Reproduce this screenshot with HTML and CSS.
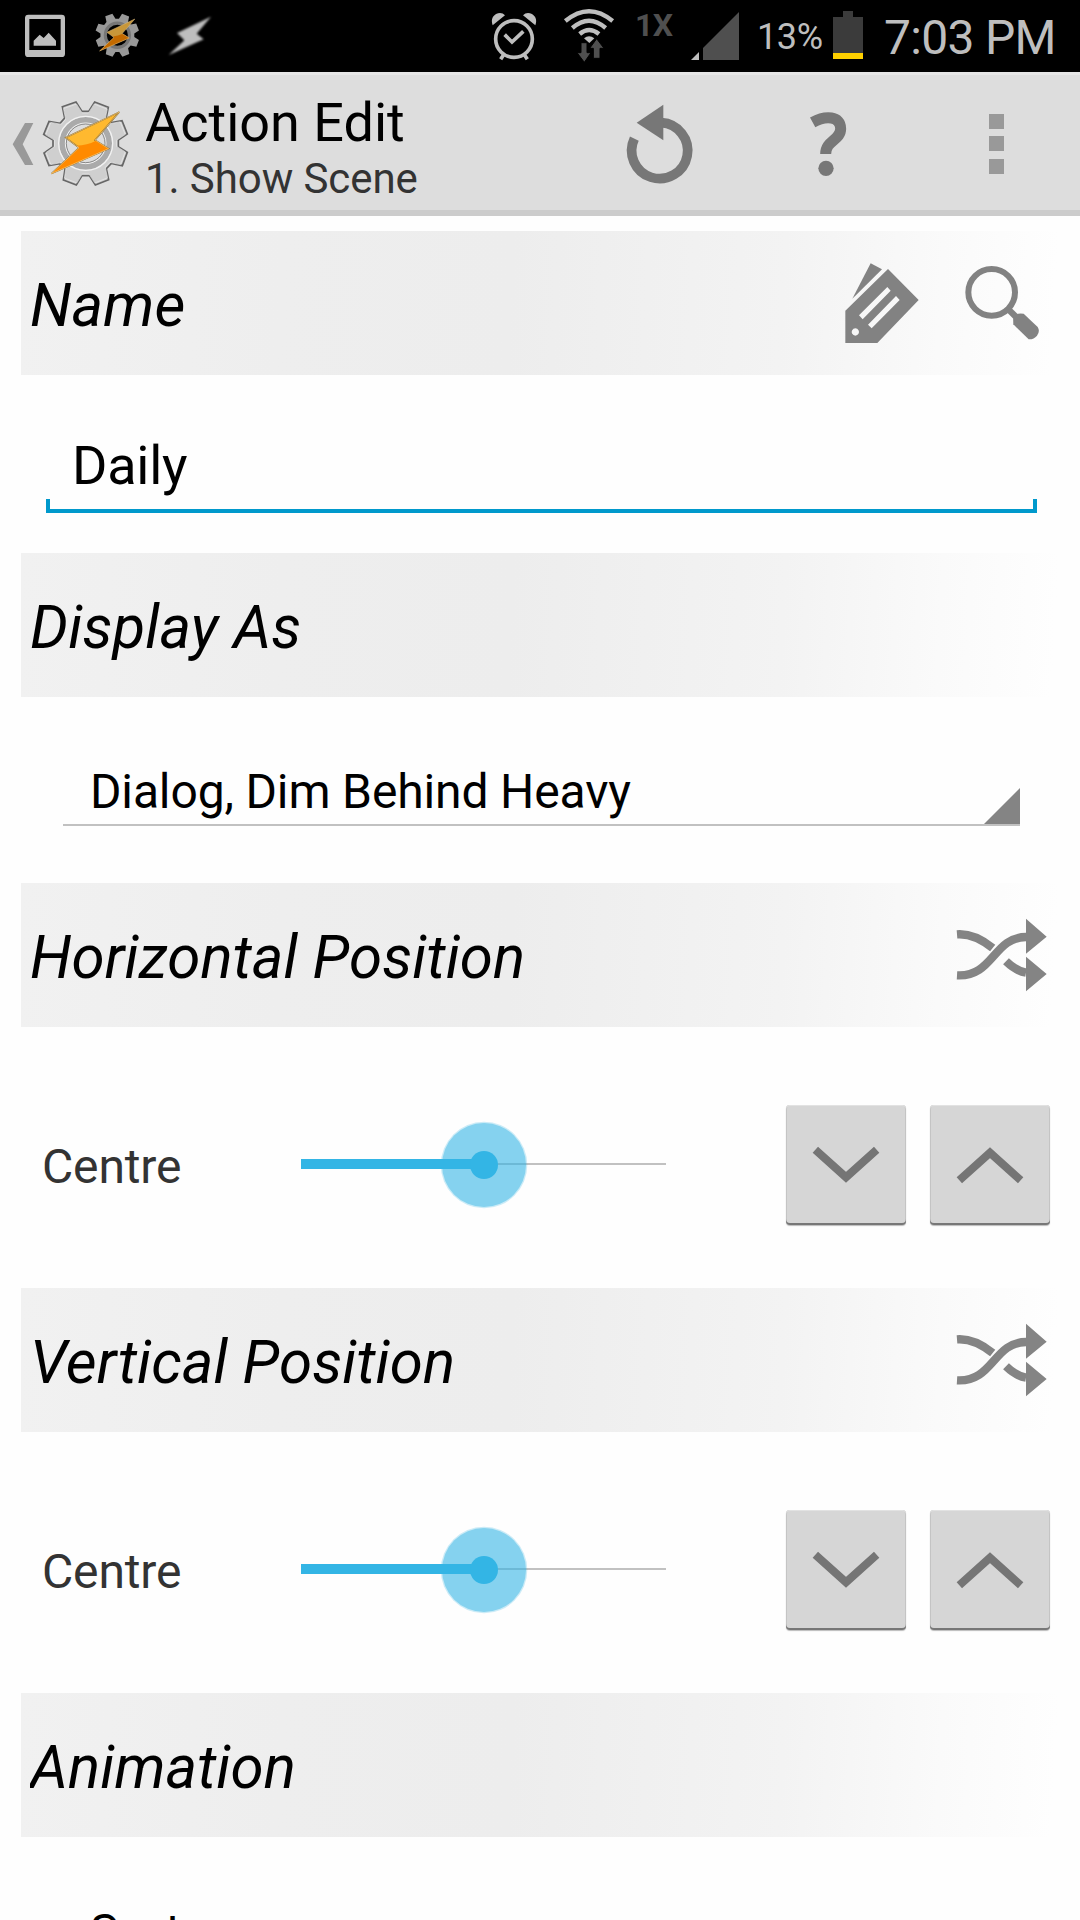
FILE: index.html
```html
<!DOCTYPE html>
<html lang="en">
<head>
<meta charset="utf-8">
<title>Action Edit</title>
<link rel="stylesheet" href="styles.css">
</head>
<body>
<svg class="defs" aria-hidden="true">
  <defs>
    <path id="gear" d="M187 320L228 306L246 334H266L284 306L325 322L319 352L334 368L366 362L382 402L355 420V440L382 457L367 497L334 490L319 506L326 539L286 555L268 527H246L229 555L190 540L195 507L179 491L147 497L132 459L159 440V420L131 403L147 364L180 370L194 354Z"/>
    <path id="bolt" d="M358 336L285 420L326 446L154 521L237 443L197 413Z"/>
    <path id="bolt-low" d="M229 437Q262 436 288 422L326 446L154 521L237 443Z"/>
    <g id="shuffle" fill="none" stroke="#848484" stroke-width="25">
      <path d="M531 583Q582 579 638 624M531 706C640 712 640 591 738 591M678 664Q708 693 738 698"/>
      <path d="M738 536L800 590L738 641ZM738 650L800 702L738 754Z" fill="#848484" stroke="none"/>
    </g>
  </defs>
</svg>
<header class="status">
  <svg class="st-pic" viewBox="60 0 150 216"><path fill="#bebebe" fill-rule="evenodd" d="M85 44H185Q195 44 195 54V161Q195 171 185 171H85Q75 171 75 161V54Q75 44 85 44ZM88 57V150H182V57Z"/><path fill="#bebebe" d="M101 137V122L119 104L131 114L146 98L168 122V137Z"/></svg>
  <svg class="st-gear" viewBox="276 0 150 216"><g transform="translate(219 -117) scale(.518)"><use href="#gear" fill="#999"/><circle cx="257" cy="430" r="70" fill="#000" stroke="#777" stroke-width="18"/><use href="#bolt" fill="#c8973a"/><use href="#bolt-low" fill="#c36a00"/><use href="#bolt" fill="none" stroke="#d8b77a" stroke-width="3"/></g></svg>
  <svg class="st-bolt" viewBox="492 0 156 216"><path fill="#bebebe" d="M633 50L590 101L611 118L506 165L553 121L531 99Z"/></svg>
  <svg class="st-alarm" viewBox="54 0 156 216"><g fill="none" stroke="#bebebe"><circle cx="132" cy="117" r="55" stroke-width="11"/><path stroke-width="11" d="M104 104L126 126L160 94M101 164L92 178M163 164L172 178"/></g><path fill="#bebebe" d="M68 76Q60 53 78 42Q94 34 105 46ZM196 76Q204 53 186 42Q170 34 159 46Z"/></svg>
  <svg class="st-wifi" viewBox="270 0 174 216"><g fill="none" stroke="#bebebe" stroke-width="13"><path d="M286 63Q357 4 428 63M307 84Q357 40 407 84M329 102Q357 78 387 102"/></g><path fill="#bebebe" d="M342 115Q357 102 373 115L358 129Z"/><path fill="#4f4f4f" stroke="#000" stroke-width="3" d="M333 128H351V158H363L343 187L321 158H333ZM370 175V145H359L380 116L402 145H390V175Z"/></svg>
  <span class="st-net">1X</span>
  <svg class="st-signal" viewBox="654 0 162 216"><path fill="#4f4f4f" d="M807 36V180H699V144Z"/><path fill="#bebebe" d="M687 156V180H663Z"/></svg>
  <span class="st-percent">13%</span>
  <svg class="st-battery" viewBox="270 0 108 216"><path fill="#3b3b3b" d="M309 33H339V51H369V159H279V51H309Z"/><path fill="#ffd000" d="M279 159H369V177H279Z"/></svg>
  <time class="st-time">7:03 PM</time>
</header>

<div class="appbar">
  <svg class="back" viewBox="0 216 114 432"><path fill="#999" d="M75 369H100L68 433L100 495H75L38 433Z"/></svg>
  <svg class="logo" viewBox="114 216 291 432"><use href="#gear" fill="#cfcfcf" stroke="#666" stroke-width="5"/><use href="#gear" fill="none" stroke="#eee" stroke-width="2" transform="translate(12.8 21.5) scale(.95)"/><circle cx="257" cy="430" r="70" fill="#ddd" stroke="#aaa" stroke-width="18"/><circle cx="257" cy="430" r="81" fill="none" stroke="#f2f2f2" stroke-width="4"/><circle cx="257" cy="430" r="61" fill="none" stroke="#f2f2f2" stroke-width="3"/><circle cx="257" cy="430" r="58" fill="none" stroke="#888" stroke-width="3"/><use href="#bolt" fill="#ffb92f" stroke="#806020" stroke-width="4"/><use href="#bolt-low" fill="#ff8a00"/><use href="#bolt" fill="none" stroke="#ffd58a" stroke-width="2"/></svg>
  <div class="titles">
    <h1>Action Edit</h1>
    <p>1. Show Scene</p>
  </div>
  <nav class="actions">
    <svg viewBox="-72 -54 504 432"><path fill="none" stroke="#777" stroke-width="29" d="M184 98A84 84 0 1 1 103 146"/><path fill="#777" d="M110 98L190 44V151Z"/></svg>
    <svg viewBox="432 -54 504 432"><path fill="none" stroke="#777" stroke-width="33" d="M638 97C676 76 722 77 722 116C722 151 677 151 677 192"/><circle cx="678" cy="235" r="23" fill="#777"/></svg>
    <svg viewBox="936 -54 504 432"><path fill="#999" d="M1167 72h45v45h-45zM1167 138h45v45h-45zM1167 207h45v45h-45z"/></svg>
  </nav>
</div>

<main>
  <section>
    <div class="head"><h2>Name</h2>
      <svg viewBox="66 18 360 432"><path fill="#828282" fill-rule="evenodd" d="M264 132L356 225L232 354H136V257ZM262 186L177 271L188 283L272 197ZM288 213L204 299L215 310L299 225ZM166 310a11 11 0 1 0 .1 0Z"/><path fill="#828282" d="M212 115L246 133L157 221Z"/></svg>
      <svg viewBox="426 18 360 432"><circle cx="575" cy="202" r="70" fill="none" stroke="#828282" stroke-width="18"/><path stroke="#828282" stroke-width="19" d="M624 252L646 274"/><path fill="#828282" d="M639 273Q650 263 671 266L713 306Q721 319 711 332Q701 344 686 343L640 298Z"/></svg>
    </div>
    <div class="body name-body"><div class="field">Daily</div></div>
  </section>
  <section>
    <div class="head"><h2>Display As</h2></div>
    <div class="body pick-body"><div class="picker"><span>Dialog, Dim Behind Heavy</span><i class="corner"></i></div></div>
  </section>
  <section>
    <div class="head"><h2>Horizontal Position</h2><svg viewBox="486 429 360 432"><use href="#shuffle"/></svg></div>
    <div class="body slide-body">
      <span class="value">Centre</span>
      <svg class="slider" viewBox="0 0 381 100"><path fill="#c1c1c1" d="M8 48H373V50H8Z"/><circle cx="191" cy="50" r="43.3" fill="#33b5e5" opacity=".25"/><circle cx="191" cy="50" r="42" fill="#33b5e5" fill-opacity=".46"/><path fill="#33b5e5" d="M8 44H191V54H8Z"/><circle cx="191" cy="50" r="14" fill="#33b5e5"/></svg>
      <button class="step" aria-label="Decrease"><svg viewBox="48 45 360 360"><path d="M136 179L228 262L320 179"/></svg></button>
      <button class="step" aria-label="Increase"><svg viewBox="480 45 360 360"><path d="M568 271L660 188L752 271"/></svg></button>
    </div>
  </section>
  <section>
    <div class="head"><h2>Vertical Position</h2><svg viewBox="486 429 360 432"><use href="#shuffle"/></svg></div>
    <div class="body slide-body">
      <span class="value">Centre</span>
      <svg class="slider" viewBox="0 0 381 100"><path fill="#c1c1c1" d="M8 48H373V50H8Z"/><circle cx="191" cy="50" r="43.3" fill="#33b5e5" opacity=".25"/><circle cx="191" cy="50" r="42" fill="#33b5e5" fill-opacity=".46"/><path fill="#33b5e5" d="M8 44H191V54H8Z"/><circle cx="191" cy="50" r="14" fill="#33b5e5"/></svg>
      <button class="step" aria-label="Decrease"><svg viewBox="48 45 360 360"><path d="M136 179L228 262L320 179"/></svg></button>
      <button class="step" aria-label="Increase"><svg viewBox="480 45 360 360"><path d="M568 271L660 188L752 271"/></svg></button>
    </div>
  </section>
  <section>
    <div class="head"><h2>Animation</h2></div>
    <div class="body pick-body"><div class="picker"><span>System</span><i class="corner"></i></div></div>
  </section>
</main>
</body>
</html>
```
FILE: styles.css
```css
* { box-sizing: border-box; margin: 0; padding: 0; }

html, body { height: 1920px; overflow: hidden; }

body {
  width: 1080px;
  display: flex;
  flex-direction: column;
  background: #fefefe;
  color: #000;
  font-family: Roboto, "Liberation Sans", sans-serif;
}

svg { display: block; flex: none; }
.defs { width: 0; height: 0; position: absolute; }

/* Status bar */
.status {
  flex: none;
  display: flex;
  align-items: flex-start;
  height: 72px;
  padding-left: 20px;
  overflow: hidden;
  background: #000;
  color: #bebebe;
  white-space: nowrap;
}
.status svg { height: 72px; }
.st-pic { width: 50px; }
.st-gear { width: 50px; margin-left: 22px; }
.st-bolt { width: 52px; margin-left: 22px; filter: blur(0.9px); }
.st-alarm { width: 52px; margin-left: 272px; }
.st-wifi { width: 58px; margin-left: 20px; }
.st-net { width: 43px; margin-left: 17px; font-size: 32px; font-weight: 700; line-height: 50px; letter-spacing: -0.5px; color: #4f4f4f; }
.st-signal { width: 54px; margin-left: 10px; }
.st-percent { width: 73px; margin-left: 15px; font-size: 36px; line-height: 75px; letter-spacing: -0.4px; }
.st-battery { width: 36px; }
.st-time { margin-left: 18px; font-size: 48px; line-height: 75px; letter-spacing: -0.7px; }

/* Action bar */
.appbar {
  flex: none;
  display: flex;
  height: 144px;
  background: #ddd;
  box-shadow: inset 0 3px #e6e6e6, inset 0 -6px #ccc;
}
.back { width: 38px; height: 144px; }
.logo { width: 97px; height: 144px; }
.titles { flex: 1; padding: 19px 0 0 10px; white-space: nowrap; }
.titles h1 { font-size: 54px; font-weight: 400; line-height: 63px; }
.titles p { font-size: 42px; line-height: 49px; letter-spacing: -0.08px; color: #333; }
.actions { display: flex; }
.actions svg { width: 168px; height: 144px; }

/* Settings */
main { flex: none; padding: 15px 18px 0 21px; }
.head {
  display: flex;
  height: 144px;
  background: linear-gradient(93deg, #f1f1f1 0%, #eee 25%, #ededed 47%, #f3f3f3 73%, #fafafa 88%, #fefefe 99%);
}
.head h2 {
  flex: 1;
  margin-left: 9px;
  overflow: hidden;
  font-size: 60px;
  font-style: italic;
  font-weight: 400;
  line-height: 149px;
  letter-spacing: 0.06px;
  white-space: nowrap;
}
.head svg { width: 120px; height: 144px; }

.name-body { height: 178px; padding: 65px 25px 0 25px; }
.field {
  height: 73px;
  padding-left: 26px;
  font-size: 54px;
  line-height: 51px;
  letter-spacing: -0.25px;
  background:
    linear-gradient(#0099cc, #0099cc) left bottom / 4px 14px no-repeat,
    linear-gradient(#0099cc, #0099cc) right bottom / 4px 14px no-repeat,
    linear-gradient(#0099cc, #0099cc) left bottom / 100% 4px no-repeat;
}

.pick-body { height: 186px; padding: 61px 42px 0 42px; }
.picker {
  display: flex;
  justify-content: space-between;
  align-items: flex-end;
  height: 68px;
  padding-left: 27px;
  border-bottom: 2px solid #c1c1c1;
  font-size: 48px;
  line-height: 65px;
  letter-spacing: -0.14px;
}
.corner { width: 36px; height: 36px; background: #848484; clip-path: polygon(100% 0, 100% 100%, 0 100%); }

.slide-body { display: flex; align-items: center; height: 261px; padding: 15px 12px 0 21px; }
.value { width: 251px; font-size: 48px; line-height: 60px; letter-spacing: -0.15px; color: #333; padding-top: 3px; }
.slider { width: 381px; height: 100px; margin-right: 112px; }
.step {
  width: 120px;
  height: 120px;
  border: 0;
  border-radius: 4px;
  background: #d6d6d6;
  box-shadow: inset 0 -2px #777, inset 0 1px #e2e2e2, inset 1px 0 #c4c4c4, inset -1px 0 #c4c4c4, 0 1px 1px #bbb;
}
.step + .step { margin-left: 24px; }
.step svg { width: 120px; height: 120px; }
.step path { fill: none; stroke: #757575; stroke-width: 24; }
```
